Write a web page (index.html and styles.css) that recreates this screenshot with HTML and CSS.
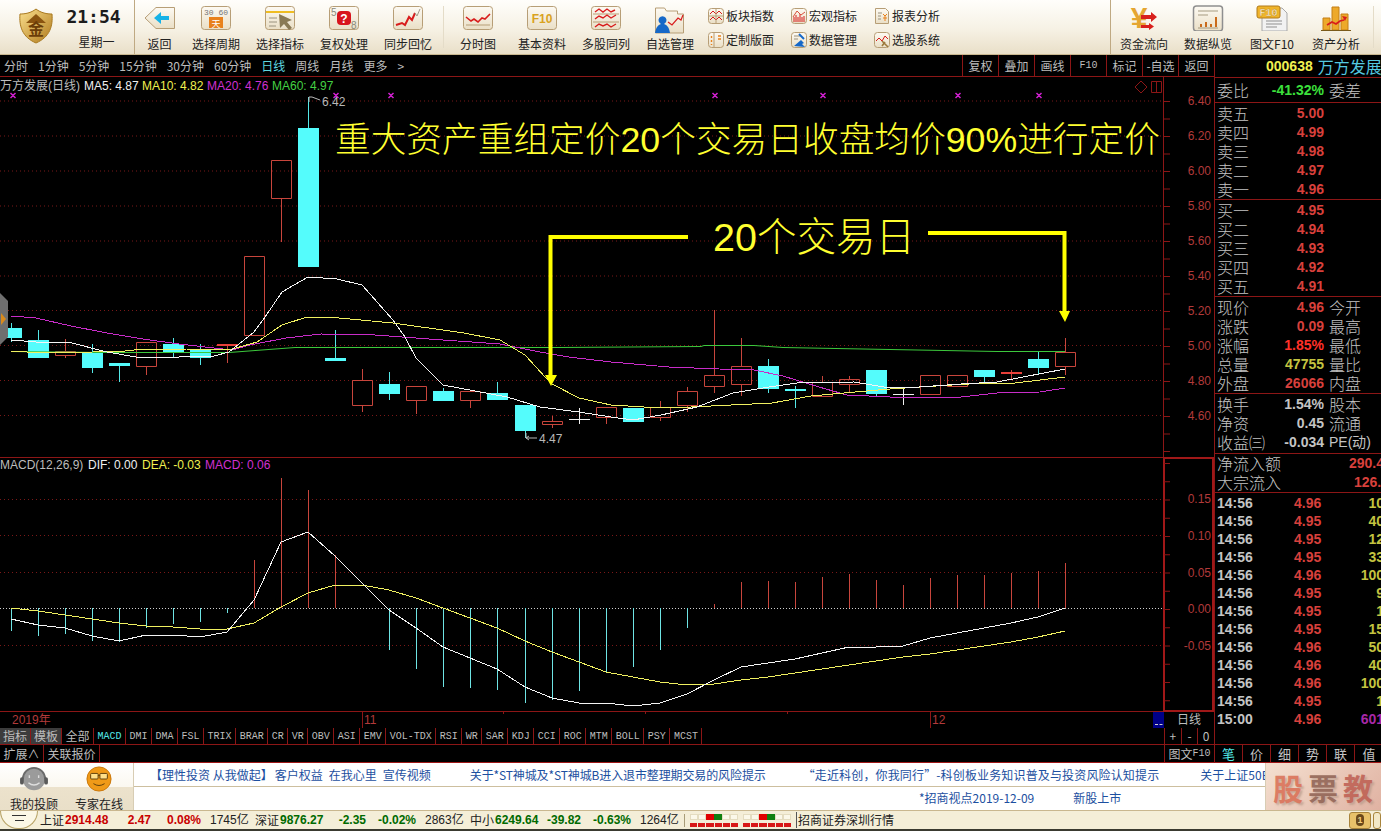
FILE: index.html
```html
<!DOCTYPE html>
<html lang="zh-CN">
<head>
  <meta charset="UTF-8" />
  <title>招商证券 - 万方发展 日线</title>
  <link rel="stylesheet" href="styles.css">
</head>
<body>
  <svg class="defs" aria-hidden="true">
    <defs>
      <linearGradient id="tileFill" x1="0" y1="0" x2="0" y2="1">
        <stop offset="0" stop-color="#fdfaf3"/><stop offset="1" stop-color="#eadfc6"/>
      </linearGradient>
      <linearGradient id="gold" x1="0" y1="0" x2="1" y2="1">
        <stop offset="0" stop-color="#fbe08e"/><stop offset="1" stop-color="#b07a1c"/>
      </linearGradient>
    </defs>
  </svg>

  <!-- top toolbar -->
  <header class="toolbar">
    <div class="brand-box">
      <svg class="shield" viewBox="0 0 34 36">
        <path d="M17 1C22 5 28 6 33 6c1 12-2 23-16 29C3 29 0 18 1 6 6 6 12 5 17 1z" fill="url(#gold)" stroke="#a9791f"/>
        <path d="M17 6L7 15h20z" fill="#8a5410"/>
        <text x="17" y="27" text-anchor="middle" class="shield-txt">金</text>
      </svg>
      <div class="clock">
        <div class="clock-time">21:54</div>
        <div class="clock-day">星期一</div>
      </div>
    </div>

    <div class="tool first">
      <svg class="ico" viewBox="0 0 32 26"><path d="M1 13L12 2.500h18.500v21H12z" fill="url(#tileFill)" stroke="#b79e76"/><path d="M10 13l7-6v4h8v4h-8v4z" fill="#17b2e6"/></svg>
      <span>返回</span>
    </div>
    <div class="tool">
      <svg class="ico" viewBox="0 0 32 26"><rect class="tile" x="1.500" y="1.500" width="29" height="23" rx="3"/><text x="16" y="10" class="ico-small" text-anchor="middle">30 60</text><rect x="9" y="12" width="14" height="11" fill="#e8811c"/><text x="16" y="21.500" class="ico-day" text-anchor="middle">天</text></svg>
      <span>选择周期</span>
    </div>
    <div class="tool">
      <svg class="ico" viewBox="0 0 32 26"><rect class="tile" x="1.500" y="1.500" width="29" height="23" rx="3"/><rect x="2" y="6" width="28" height="2" fill="#efbd22"/><path d="M5 13h8M5 17h8M5 21h7" stroke="#9a927f"/><path d="M15 9l13 6-5 2 5 6-3 2-5-6-4 4z" fill="#8a7a55"/></svg>
      <span>选择指标</span>
    </div>
    <div class="tool">
      <svg class="ico" viewBox="0 0 32 26"><rect class="tile" x="1.500" y="1.500" width="29" height="23" rx="3"/><text x="3" y="11" class="ico-num">5</text><text x="23" y="24" class="ico-num">8</text><rect x="9" y="6" width="14" height="14" rx="4" fill="#d8141c"/><text x="16" y="17.500" class="ico-q" text-anchor="middle">?</text></svg>
      <span>复权处理</span>
    </div>
    <div class="tool">
      <svg class="ico" viewBox="0 0 32 26"><rect class="tile" x="1.500" y="1.500" width="29" height="23" rx="3"/><path d="M4 20l6-2 3 2 4-8 3 3 3-7" fill="none" stroke="#d81c1c" stroke-width="2"/><path d="M23 8l2 3 3-7" fill="none" stroke="#a09a88"/></svg>
      <span>同步回忆</span>
    </div>
    <i class="tool-sep light"></i>
    <div class="tool">
      <svg class="ico" viewBox="0 0 32 26"><rect class="tile" x="1.500" y="1.500" width="29" height="23" rx="3"/><path d="M4 12l5 4 3-2 4 3 4-4 3 1 5-5" fill="none" stroke="#d81c1c" stroke-width="1.600"/><path d="M4 20h24" stroke="#b79e76"/></svg>
      <span>分时图</span>
    </div>
    <div class="tool">
      <svg class="ico" viewBox="0 0 32 26"><rect class="tile" x="1.500" y="1.500" width="29" height="23" rx="3"/><text x="16" y="17.500" class="ico-f10" text-anchor="middle">F10</text></svg>
      <span>基本资料</span>
    </div>
    <div class="tool">
      <svg class="ico" viewBox="0 0 32 26"><rect class="tile" x="1.500" y="1.500" width="29" height="23" rx="3"/><path d="M3 9h26M3 17h26" stroke="#b79e76"/><path d="M5 7l4-3 4 3 4-3 4 3 4-2M5 14l4-3 4 2 4-3 4 3 5-3M5 22l4-3 4 2 4-2 4 3 5-3" fill="none" stroke="#d81c1c" stroke-width="1.400"/></svg>
      <span>多股同列</span>
    </div>
    <div class="tool">
      <svg class="ico tall" viewBox="0 0 32 30"><path d="M1.500 28V3h9l2 3h11v3h6v19z" fill="url(#tileFill)" stroke="#b79e76"/><path d="M1 28c1-6 3-8 6-9a4 4 0 1 1 3 0c3 1 5 3 6 9z" fill="#1668c8"/><path d="M14 17l4 3 6-7 3 2 2-5" fill="none" stroke="#d81c1c" stroke-width="1.200"/></svg>
      <span>自选管理</span>
    </div>
    <div class="tool-small">
      <div class="mini-tool"><svg viewBox="0 0 16 16"><rect class="tile" x=".5" y=".5" width="15" height="15" rx="3"/><path d="M2 6l3-3 3 3 3-3 3 3M2 12l3-3 3 3 3-3 3 3" fill="none" stroke="#d81c1c"/><path d="M8 1v14M1 8h14" stroke="#b79e76"/></svg><span>板块指数</span></div>
      <div class="mini-tool"><svg viewBox="0 0 16 16"><rect class="tile" x=".5" y=".5" width="15" height="15" rx="3"/><path d="M6 1v14" stroke="#b79e76"/><path d="M3.500 4v2M3.500 8v2M3.500 12v1M10 4h3M10 7h3" stroke="#e8811c" stroke-width="1.400"/></svg><span>定制版面</span></div>
    </div>
    <div class="tool-small">
      <div class="mini-tool"><svg viewBox="0 0 16 16"><rect class="tile" x=".5" y=".5" width="15" height="15" rx="3"/><path d="M3 14V9M5 14V7M7 14V9M9 14V6M11 14V9M13 14V8" stroke="#d81c1c"/><path d="M2 9l4-6 4 4 4-3" fill="none" stroke="#d8503c"/></svg><span>宏观指标</span></div>
      <div class="mini-tool"><svg viewBox="0 0 16 16"><rect class="tile" x=".5" y=".5" width="15" height="15" rx="3"/><path d="M3 4h6M3 7h4" stroke="#9a927f"/><path d="M3 14l7-6 3 3-2 1 3 3z" fill="#1668c8"/><path d="M8 2l5 5" stroke="#1668c8" stroke-width="2"/></svg><span>数据管理</span></div>
    </div>
    <div class="tool-small last">
      <div class="mini-tool"><svg viewBox="0 0 16 16"><path d="M1.500 .5h10l3 3v12h-13z" fill="url(#tileFill)" stroke="#b79e76"/><path d="M4 5h4M4 8h3M4 11h3" stroke="#9a927f"/><path d="M9 6l2 2 2-2M11 8v5M9 10h4" fill="none" stroke="#e8811c"/></svg><span>报表分析</span></div>
      <div class="mini-tool"><svg viewBox="0 0 16 16"><rect class="tile" x=".5" y=".5" width="15" height="15" rx="3"/><path d="M2 9l3-3 3 3 3-5 3 3" fill="none" stroke="#d81c1c"/><path d="M8 9l6 6M8 14l3-4" stroke="#9c7a3c" stroke-width="1.600"/></svg><span>选股系统</span></div>
    </div>
    <i class="tool-sep"></i>
    <div class="tool">
      <svg class="ico" viewBox="0 0 32 26"><text x="11" y="23" class="ico-yen" text-anchor="middle">¥</text><path d="M13 10h10V7l6 5-6 5v-3H13zM13 20h8v-2l5 3.500-5 3.500v-2h-8z" fill="#d8201c"/></svg>
      <span>资金流向</span>
    </div>
    <div class="tool">
      <svg class="ico" viewBox="0 0 32 26"><rect x="1.500" y="1" width="29" height="25" rx="3" fill="url(#tileFill)" stroke="#8f8f8f" stroke-width="1.500"/><path d="M6 6h20M6 10h10" stroke="#a59a80"/><path d="M9 22v-3M14 22v-5M19 22v-3M24 22V12" stroke="#c96a1a" stroke-width="2"/><path d="M6 23h20" stroke="#a59a80"/></svg>
      <span>数据纵览</span>
    </div>
    <div class="tool">
      <svg class="ico" viewBox="0 0 32 26"><path d="M6 3h20l5 5v18H6z" fill="#f2f2f2" stroke="#a8a8a8"/><rect x="1" y="1" width="23" height="12" rx="2" fill="#f0b428" stroke="#b07a1c"/><text x="12.500" y="11" class="ico-f10t" text-anchor="middle">F10</text><path d="M10 16h16M10 19h16M10 22h11" stroke="#8f8f8f"/></svg>
      <span>图文F10</span>
    </div>
    <div class="tool">
      <svg class="ico" viewBox="0 0 32 26"><path d="M3 25V13h7v12zM12 25V2h7v23zM21 25V9h7v16z" fill="#eda92a" stroke="#c47f14"/><path d="M1 25.500h30" stroke="#7a5a1a"/><path d="M7 20l5-3 4 2 4-3 4-1" fill="none" stroke="#d81c1c" stroke-width="1.800"/><path d="M22 11l5 1-2 4z" fill="#d81c1c"/></svg>
      <span>资产分析</span>
    </div>
    <i class="tool-sep light end"></i>
  </header>

  <div class="work">
    <div class="chart-col">
      <div class="period-bar">
        <div class="periods">
          <span>分时</span><span>1分钟</span><span>5分钟</span><span>15分钟</span><span>30分钟</span><span>60分钟</span>
          <span class="on">日线</span><span>周线</span><span>月线</span><span>更多</span><span>&gt;</span>
        </div>
        <div class="actions">
          <span>复权</span><span>叠加</span><span>画线</span><span class="latin">F10</span><span>标记</span><span>-自选</span><span>返回</span>
        </div>
      </div>

      <!-- coordinates below are the same as page coordinates -->
      <svg class="chart" viewBox="0 77 1214 651">
        <path class="grid" d="M0 101H1163M0 136H1163M0 171H1163M0 206H1163M0 241H1163M0 276H1163M0 310.500H1163M0 345.500H1163M0 380.500H1163M0 415.500H1163"/>
        <path class="grid" d="M0 499.500H1163M0 535.500H1163M0 572.500H1163M0 645.500H1163"/>
        <path class="zero" d="M0 608.500H1163"/>

        <!-- frame and axes -->
        <path class="frame" d="M0 457.500H1214M1163.500 77V711M0 711.500H1214"/>
        <rect class="frame-hi" x="1164" y="458" width="49" height="253"/>
        <path class="ticks" d="M1167 101V452"/>
        <path class="ticks-b" d="M1167 463V705"/>
        <path class="frame" d="M1141 81l6 6-6 6-6-6zM1151.500 81.500h10v11h-10zM1156.500 81.500v11"/>
        <path class="frame" d="M362.500 711V728M503.500 711V714M645.500 711V714M787.500 711V714M930.500 711V728"/>

        <g class="axis">
          <text x="1211" y="105">6.40</text><text x="1211" y="140">6.20</text><text x="1211" y="175">6.00</text><text x="1211" y="210">5.80</text><text x="1211" y="245">5.60</text>
          <text x="1211" y="280">5.40</text><text x="1211" y="315">5.20</text><text x="1211" y="350">5.00</text><text x="1211" y="385">4.80</text><text x="1211" y="420">4.60</text>
          <text x="1211" y="503">0.15</text><text x="1211" y="540">0.10</text><text x="1211" y="577">0.05</text><text x="1211" y="613">0.00</text><text x="1211" y="650">-0.05</text>
        </g>

        <!-- legends -->
        <g class="legend">
          <text x="0" y="90" class="c-gray cjk">万方发展(日线)</text>
          <text x="84" y="90" class="c-white">MA5: 4.87</text>
          <text x="142" y="90" class="c-yellow">MA10: 4.82</text>
          <text x="207" y="90" class="c-pink">MA20: 4.76</text>
          <text x="272" y="90" class="c-green">MA60: 4.97</text>
          <text x="0" y="469" class="c-gray">MACD(12,26,9)</text>
          <text x="88" y="469" class="c-white">DIF: 0.00</text>
          <text x="142" y="469" class="c-yellow">DEA: -0.03</text>
          <text x="205" y="469" class="c-pink">MACD: 0.06</text>
        </g>

        <!-- markers on the top of the price panel -->
        <path class="marks" d="M10.500 93l5 5m0-5l-5 5M333.500 93l5 5m0-5l-5 5M388.500 93l5 5m0-5l-5 5M712.500 93l5 5m0-5l-5 5M820.500 93l5 5m0-5l-5 5M955.500 93l5 5m0-5l-5 5M1036.500 93l5 5m0-5l-5 5"/>

        <!-- candles -->
        <path class="wick-up" d="M65.500 339V351M65.500 356V358M146.500 367V375M227.500 346V363M281.500 199V242M362.500 369V380M362.500 406V412M416.500 401V414M470.500 401V408M552.500 416V421M552.500 425V428M606.500 418V424M660.500 401V407M660.500 418V421M687.500 387V391M687.500 406V412M714.500 310V375M714.500 387V393M741.500 338V366M741.500 385V396M822.500 376V382M849.500 376V379M849.500 385V393M1011.500 370V372M1011.500 374V379M1065.500 338V352M1065.500 367V375"/>
        <path class="body-up" d="M55.500 351.500h20v4h-20zM136.500 342.500h20v24h-20zM244.500 256.500h20v79h-20zM271.500 160.500h20v38h-20zM352.500 380.500h20v25h-20zM406.500 386.500h20v14h-20zM460.500 391.500h20v9h-20zM542.500 421.500h20v3h-20zM596.500 407.500h20v10h-20zM650.500 407.500h20v10h-20zM677.500 391.500h20v14h-20zM704.500 375.500h20v11h-20zM731.500 366.500h20v18h-20zM812.500 382.500h20v14h-20zM839.500 379.500h20v5h-20zM920.500 375.500h20v19h-20zM947.500 375.500h20v11h-20zM1055.500 352.500h20v14h-20z"/>
        <path class="body-flat" d="M217 344h21v2h-21zM1001 372h21v2h-21z"/>
        <path class="wick-down" d="M11.500 323V328M11.500 338V342M38.500 330V340M92.500 344V353M92.500 368V373M119.500 366V382M173.500 338V344M173.500 353V358M200.500 344V349M200.500 358V365M308.500 97V128M335.500 330V358M389.500 372V384M389.500 394V400M443.500 388V391M497.500 382V393M525.500 431V438M768.500 359V366M768.500 389V393M795.500 386V389M795.500 391V408M876.500 394V396M984.500 377V382M1038.500 352V359M1038.500 368V375"/>
        <path class="body-down" d="M1 328h21v10H1zM28 340h21v18H28zM82 353h21v15H82zM109 363h21v3h-21zM163 344h21v9h-21zM190 349h21v9h-21zM298 128h21v139h-21zM325 358h21v3h-21zM379 384h21v10h-21zM433 391h21v10h-21zM487 393h21v7h-21zM515 405h21v26h-21zM623 408h21v14h-21zM758 366h21v23h-21zM785 389h21v2h-21zM866 370h21v24h-21zM974 370h21v7h-21zM1028 359h21v9h-21z"/>
        <path class="doji" d="M569 419.500h21M579.500 408V424M893 394.500h21M903.500 388V405"/>

        <!-- moving averages -->
        <polyline class="l-green" points="11,351.500 104,352.500 229,352.500 295,347.500 560,347.500 701,346.500 704,345.500 754,345.500 783,347.500 836,348.500 890,349.500 944,350.500 997,351.500 1065,351.500"/>
        <polyline class="l-pink" points="11,316 36,318 71,326 107,333 143,339 179,344 214,348 232,350 250,345 286,338 321,334 375,335 429,339 500,344 540,352 569,357 611,362 669,367 719,369 754,370 783,376 819,387 847,395 890,397 961,397 997,393 1040,392 1065,388"/>
        <polyline class="l-yellow" points="11,351 43,353 93,352 125,351 143,349 186,349 229,350 257,342 282,325 307,317 339,318 393,323 464,333 500,340 525,355 546,378 552,384 579,398 611,405 644,407 672,408 711,406 772,403 811,396 844,393 890,389 936,386 986,383 1015,383 1040,380 1065,377"/>
        <polyline class="l-white" points="11,340 36,342 68,342 107,352 136,357 179,357 214,356 229,352 254,332 263,320 282,292 308,277 337,279 362,285 393,320 405,337 416,358 443,385 507,397 540,407 579,412 611,417 633,420 661,415 697,407 733,393 769,387 797,383 854,382 890,388 919,387 961,384 997,382 1065,369"/>

        <!-- high and low labels -->
        <path class="flag" d="M309 102V97h3M312 97l8 3M526 433V438h11M526 438l3-2M526 438l3 2"/>
        <text x="322" y="106" class="flag-txt">6.42</text>
        <text x="539" y="443" class="flag-txt">4.47</text>

        <!-- hand drawn notes -->
        <text x="335" y="152" class="note">重大资产重组定价<tspan class="note-num">20</tspan>个交易日收盘均价<tspan class="note-num">90%</tspan>进行定价</text>
        <text x="713" y="251" class="note big"><tspan class="note-num">20</tspan>个交易日</text>
        <path class="arrow" d="M688 237H550.500V377M928 233H1064.500V312"/>
        <path class="arrow-head" d="M545 375h12l-6 11zM1059 311h11l-5 11z"/>

        <!-- left drawer handle -->
        <path d="M0 293l8 8v36l-8 8z" fill="#6f6f6f"/>
        <path d="M1 313l5 6-5 6z" fill="#d98a1c"/>

        <!-- MACD -->
        <path class="bar-down" d="M11.500 608V631M38.500 608V636M65.500 608V634M92.500 608V641M119.500 608V642M146.500 608V628M173.500 608V624M200.500 608V622M227.500 608V613M389.500 608V650M416.500 608V669M443.500 608V687M470.500 608V688M497.500 608V690M525.500 608V703M552.500 608V700M579.500 608V691M606.500 608V673M633.500 608V667M660.500 608V650M687.500 608V628"/>
        <path class="bar-up" d="M254.500 608V560M281.500 608V478M308.500 608V490M335.500 608V555M714.500 608V604M741.500 608V582M768.500 608V581M795.500 608V582M822.500 608V577M849.500 608V574M876.500 608V580M903.500 608V585M930.500 608V578M957.500 608V575M984.500 608V575M1011.500 608V573M1038.500 608V571M1065.500 608V563"/>
        <polyline class="l-yellow" points="11,608 38,611 65,615 92,619 119,623 146,626 173,627 200,629 227,629 254,623 281,607 308,593 335,585 362,585 389,590 416,598 443,608 470,618 497,628 525,641 552,652 579,662 606,672 633,677 660,682 687,685 714,684 741,680 768,677 795,673 822,669 849,665 876,661 903,657 930,654 957,650 984,646 1011,642 1038,637 1065,631"/>
        <polyline class="l-white" points="11,619 38,625 65,628 92,636 119,641 146,635 173,635 200,637 227,632 254,600 281,542 308,532 335,556 362,583 389,610 416,628 443,647 470,658 497,669 525,687 552,698 579,703 606,703 633,706 660,703 687,694 714,680 741,667 768,663 795,659 822,653 849,647 876,647 903,646 930,638 957,633 984,628 1011,623 1038,617 1065,608"/>

        <!-- date row -->
        <text x="12" y="724" class="date-txt">2019年</text>
        <text x="364" y="724" class="date-txt">11</text>
        <text x="932" y="724" class="date-txt">12</text>
        <rect x="1153" y="712" width="11" height="16" fill="#000088"/>
        <path d="M1155 724.500h3M1159.500 724.500h3" stroke="#d0d0d0"/>
        <text x="1189" y="724" class="date-kind" text-anchor="middle">日线</text>
      </svg>

      <div class="tabs-row">
        <div class="tabs">
          <span class="solid">指标</span><span class="solid">模板</span><span>全部</span><span class="mono on">MACD</span><span class="mono">DMI</span><span class="mono">DMA</span><span class="mono">FSL</span><span class="mono">TRIX</span><span class="mono">BRAR</span><span class="mono">CR</span><span class="mono">VR</span><span class="mono">OBV</span><span class="mono">ASI</span><span class="mono">EMV</span><span class="mono">VOL-TDX</span><span class="mono">RSI</span><span class="mono">WR</span><span class="mono">SAR</span><span class="mono">KDJ</span><span class="mono">CCI</span><span class="mono">ROC</span><span class="mono">MTM</span><span class="mono">BOLL</span><span class="mono">PSY</span><span class="mono">MCST</span>
        </div>
        <div class="zoom-btns"><span>+</span><span>-</span><span>0</span></div>
      </div>
      <div class="ext-row">
        <div class="tabs"><span>扩展∧</span><span>关联报价</span></div>
        <div class="ext-right">图文<b class="mono-in">F10</b></div>
      </div>
    </div>

    <!-- quote panel -->
    <aside class="side">
      <div class="stock"><span class="code">000638</span><span class="name">万方发展</span></div>
      <div class="sect wei"><div class="row"><label>委比</label><b class="green">-41.32%</b><label class="lbl2">委差</label></div></div>
      <div class="sect">
        <div class="row"><label>卖五</label><b>5.00</b></div>
        <div class="row"><label>卖四</label><b>4.99</b></div>
        <div class="row"><label>卖三</label><b>4.98</b></div>
        <div class="row"><label>卖二</label><b>4.97</b></div>
        <div class="row"><label>卖一</label><b>4.96</b></div>
      </div>
      <div class="sect">
        <div class="row"><label>买一</label><b>4.95</b></div>
        <div class="row"><label>买二</label><b>4.94</b></div>
        <div class="row"><label>买三</label><b>4.93</b></div>
        <div class="row"><label>买四</label><b>4.92</b></div>
        <div class="row"><label>买五</label><b>4.91</b></div>
      </div>
      <div class="sect">
        <div class="row"><label>现价</label><b>4.96</b><label class="lbl2">今开</label></div>
        <div class="row"><label>涨跌</label><b>0.09</b><label class="lbl2">最高</label></div>
        <div class="row"><label>涨幅</label><b class="hot">1.85%</b><label class="lbl2">最低</label></div>
        <div class="row"><label>总量</label><b class="olive">47755</b><label class="lbl2">量比</label></div>
        <div class="row"><label>外盘</label><b>26066</b><label class="lbl2">内盘</label></div>
      </div>
      <div class="sect fin">
        <div class="row"><label>换手</label><b class="plain">1.54%</b><label class="lbl2">股本</label></div>
        <div class="row"><label>净资</label><b class="plain">0.45</b><label class="lbl2">流通</label></div>
        <div class="row"><label class="wide">收益㈢</label><b class="plain short">-0.034</b><label class="lbl2 pe">PE(动)</label></div>
      </div>
      <div class="sect flow">
        <div class="row"><label class="wide4">净流入额</label><b class="clip">290.4</b></div>
        <div class="row"><label class="wide4">大宗流入</label><b class="clip two">126.</b></div>
      </div>
      <div class="ticks-list">
        <div class="tick"><b>14:56</b><b class="p">4.96</b><b class="v">10</b></div>
        <div class="tick"><b>14:56</b><b class="p">4.95</b><b class="v">40</b></div>
        <div class="tick"><b>14:56</b><b class="p">4.95</b><b class="v">12</b></div>
        <div class="tick"><b>14:56</b><b class="p">4.95</b><b class="v">33</b></div>
        <div class="tick"><b>14:56</b><b class="p">4.96</b><b class="v">100</b></div>
        <div class="tick"><b>14:56</b><b class="p">4.95</b><b class="v">9</b></div>
        <div class="tick"><b>14:56</b><b class="p">4.95</b><b class="v">1</b></div>
        <div class="tick"><b>14:56</b><b class="p">4.95</b><b class="v">15</b></div>
        <div class="tick"><b>14:56</b><b class="p">4.96</b><b class="v">50</b></div>
        <div class="tick"><b>14:56</b><b class="p">4.96</b><b class="v">40</b></div>
        <div class="tick"><b>14:56</b><b class="p">4.96</b><b class="v">100</b></div>
        <div class="tick"><b>14:56</b><b class="p">4.95</b><b class="v">1</b></div>
        <div class="tick"><b>15:00</b><b class="p">4.96</b><b class="v last">601</b></div>
      </div>
      <div class="side-tabs"><span class="on">笔</span><span>价</span><span>细</span><span>势</span><span>联</span><span>值</span></div>
    </aside>
  </div>

  <!-- news strip -->
  <section class="news">
    <div class="advisors">
      <div class="advisor">
        <svg viewBox="0 0 32 28"><circle cx="16" cy="14" r="12" fill="#9b9b9b"/><path d="M4 14a12 12 0 0 1 24 0" fill="none" stroke="#6a6a6a" stroke-width="2"/><rect x="1" y="12" width="4" height="8" rx="2" fill="#5a5a5a"/><rect x="27" y="12" width="4" height="8" rx="2" fill="#5a5a5a"/><path d="M11 10v3M21 10v3M10 18q6 5 12 0" fill="none" stroke="#dedede" stroke-width="1.500"/></svg>
        <span>我的投顾</span>
      </div>
      <div class="advisor">
        <svg viewBox="0 0 32 28"><circle cx="16" cy="14" r="13" fill="#f09a18" stroke="#c87408"/><rect x="7" y="8" width="8" height="6" rx="1" fill="#ffe08a" stroke="#5a3a08"/><rect x="17" y="8" width="8" height="6" rx="1" fill="#ffe08a" stroke="#5a3a08"/><path d="M15 10h2M10 19q6 4 12 0" fill="none" stroke="#5a3a08"/></svg>
        <span>专家在线</span>
      </div>
    </div>
    <div class="ticker">
      <div class="ticker-row top">
        <span>【理性投资 从我做起】</span><span class="near lead">客户权益</span><span class="near">在我心里</span><span class="near">宣传视频</span>
        <span class="item-a">关于*ST神城及*ST神城B进入退市整理期交易的风险提示</span>
        <span class="item-b">“走近科创，你我同行”-科创板业务知识普及与投资风险认知提示</span>
        <span class="item-c">关于上证50E</span>
      </div>
      <div class="ticker-row bottom">
        <span>*招商视点2019-12-09</span><span class="item-d">新股上市</span>
      </div>
    </div>
    <div class="promo"><span class="p1">股</span><span class="p2">票</span><span class="p3">教</span></div>
  </section>

  <!-- status bar -->
  <footer class="status">
    <div class="menu-btn"><i></i><i></i></div>
    <div class="idx"><span class="n">上证</span><b class="val up">2914.48</b><b class="chg up">2.47</b><b class="pct up">0.08%</b><span class="amt">1745亿</span></div>
    <div class="idx"><span class="n">深证</span><b class="val down">9876.27</b><b class="chg down">-2.35</b><b class="pct down">-0.02%</b><span class="amt">2863亿</span></div>
    <div class="idx third"><span class="n">中小</span><b class="val down">6249.64</b><b class="chg down">-39.82</b><b class="pct down">-0.63%</b><span class="amt">1264亿</span></div>
    <div class="meters">
      <div class="meter"><div class="cells"><i></i><i></i><i class="r"></i><i class="g"></i><i></i><i></i></div><div class="dash"><i></i><i></i><i></i><i></i><i></i><i></i></div></div>
      <div class="meter"><div class="cells"><i></i><i></i><i class="r"></i><i class="g"></i><i></i><i></i></div><div class="dash"><i></i><i></i><i></i><i></i><i></i><i></i></div></div>
    </div>
    <div class="broker">招商证券深圳行情</div>
    <div class="status-btns"><span class="sbtn"><i>1</i></span><span class="sbtn cut"></span></div>
  </footer>
</body>
</html>
```

FILE: styles.css
```css
* { box-sizing: border-box; }
html, body { margin: 0; padding: 0; }
body {
  width: 1381px;
  height: 831px;
  overflow: hidden;
  background: #000;
  font-family: "Noto Sans CJK SC", "Liberation Sans", sans-serif;
  font-size: 12px;
  line-height: 1;
  display: flex;
  flex-direction: column;
}
.defs { display: block; width: 0; height: 0; }

/* toolbar */
.toolbar {
  flex: none;
  height: 55px;
  display: flex;
  background: linear-gradient(#fffefb, #f6f1e4 55%, #e9dfc8);
  border-bottom: 1px solid #c9b78f;
  color: #222;
}
.brand-box {
  width: 135px;
  display: flex;
  border-right: 1px solid #bfa982;
  padding: 8px 0 0 19px;
}
.shield { width: 34px; height: 36px; }
.shield-txt { font-size: 16px; font-weight: 700; fill: #6a3d08; }
.clock { width: 81px; text-align: center; }
.clock-time {
  font: 700 18px "DejaVu Sans Mono", monospace;
  height: 24px;
  margin-top: -2px;
  color: #1c1c1c;
}
.clock-day { margin-top: 6px; padding-left: 6px; font-size: 12px; color: #222; }

.tool {
  width: 64px;
  display: flex;
  flex-direction: column;
  align-items: center;
  padding-top: 5px;
  position: relative;
}
.tool.first { width: 49px; }
.tool span { position: absolute; top: 38px; white-space: nowrap; }
.ico { width: 32px; height: 26px; display: block; }
.ico.tall { height: 30px; }
.tile { fill: url(#tileFill); stroke: #b79e76; }
.ico-small { font: 8px "Liberation Mono", monospace; fill: #777; }
.ico-day { font-size: 9px; fill: #fff; }
.ico-num { font: 10px "Liberation Sans", sans-serif; fill: #8a8a7a; }
.ico-q { font: 700 12px "Liberation Sans", sans-serif; fill: #fff; }
.ico-f10 { font: 700 12px "Liberation Sans", sans-serif; fill: #d9a21e; }
.ico-f10t { font: 700 10px "Liberation Mono", monospace; fill: #fff6d0; stroke: #b07a1c; stroke-width: .3px; }
.ico-yen { font: 700 30px "Liberation Sans", sans-serif; fill: #e5a632; }
.tool-sep { width: 1px; margin: 0 1px 0 0; background: #bfa982; flex: none; }
.tool-sep.light { background: #e4dcc8; margin: 6px 2px 6px 3px; }
.tool-sep.light.end { margin-left: 5px; }

.tool-small {
  width: 83px;
  padding: 8px 0 0 6px;
  display: flex;
  flex-direction: column;
  gap: 8px;
}
.tool-small.last { width: 242px; }
.mini-tool { display: flex; align-items: center; gap: 2px; height: 16px; }
.mini-tool svg { width: 16px; height: 16px; flex: none; }

/* main area */
.work { flex: none; height: 708px; display: flex; }
.chart-col { width: 1214px; flex: none; display: flex; flex-direction: column; }

.period-bar {
  height: 22px;
  flex: none;
  display: flex;
  justify-content: space-between;
  border-bottom: 1px solid #8c1616;
  color: #bdbdbd;
}
.periods { display: flex; gap: 10px; padding-left: 4px; align-items: center; }
.periods .on { color: #5fd8e0; }
.actions { display: flex; }
.actions span {
  width: 36px;
  display: flex;
  align-items: center;
  justify-content: center;
  border-left: 1px solid #8c1616;
}
.actions .latin { font: 10px "Liberation Mono", monospace; }

.chart { display: block; width: 1214px; height: 651px; flex: none; }
.chart text { font-family: "Liberation Sans", "Noto Sans CJK SC", sans-serif; font-size: 12px; }
.grid { stroke: #7a1818; fill: none; stroke-dasharray: 1 3; }
.zero { stroke: #cfcfcf; fill: none; stroke-dasharray: 1 2; }
.frame { stroke: #8c1616; fill: none; }
.frame-hi { stroke: #a01818; stroke-width: 2; fill: none; }
.ticks { stroke: #8c1616; stroke-width: 6; stroke-dasharray: 1 16.500; fill: none; }
.ticks-b { stroke: #8c1616; stroke-width: 6; stroke-dasharray: 1 17.250; fill: none; }
.axis text { fill: #b23a3a; text-anchor: end; }
.c-gray { fill: #bdbdbd; }
.c-white { fill: #f0f0f0; }
.c-yellow { fill: #f0f050; }
.c-pink { fill: #d030d0; }
.c-green { fill: #44d044; }
.marks { stroke: #d020d0; stroke-width: 1.500; fill: none; }
.wick-up { stroke: #c8453c; fill: none; }
.body-up { stroke: #c8453c; fill: none; }
.body-flat { fill: #e8403a; }
.wick-down { stroke: #54e8e8; fill: none; }
.body-down { fill: #54fcfc; }
.doji { stroke: #f0f0f0; fill: none; }
.l-green, .l-pink, .l-yellow, .l-white { fill: none; stroke-width: 1; shape-rendering: crispEdges; }
.l-green { stroke: #3cc83c; shape-rendering: auto; }
.l-pink { stroke: #c82cc8; }
.l-yellow { stroke: #f0f060; }
.l-white { stroke: #f4f4f4; }
.flag { stroke: #b8b8b8; fill: none; }
.chart .flag-txt { fill: #b8b8b8; }
.chart .note {
  font-family: "Noto Sans CJK SC", sans-serif;
  font-size: 35.700px;
  font-weight: 300;
  fill: #ffff30;
}
.chart .note.big { font-size: 39.500px; }
.note-num { font-family: "Liberation Sans", sans-serif; }
.arrow { stroke: #ffff00; stroke-width: 4; fill: none; }
.arrow-head { fill: #ffff00; }
.bar-up { stroke: #c8453c; fill: none; }
.bar-down { stroke: #6ee4e4; fill: none; }
.chart .date-txt { fill: #b23a3a; font-size: 12px; }
.chart .date-kind { fill: #bdbdbd; }

.tabs-row, .ext-row {
  flex: none;
  display: flex;
  justify-content: space-between;
  color: #bdbdbd;
  border-bottom: 1px solid #8c1616;
}
.tabs-row { height: 17px; }
.ext-row { height: 18px; border-bottom-color: #a01818; }
.tabs { display: flex; }
.tabs span {
  padding: 0 3.500px;
  display: flex;
  align-items: center;
  border-right: 1px solid #8c1616;
}
.tabs .solid { background: #3c3c3c; padding: 0 3px; }
.tabs .mono { font: 10px "Liberation Mono", monospace; }
.tabs .on { color: #54e8e8; }
.zoom-btns { width: 50px; display: flex; border-left: 1px solid #8c1616; }
.zoom-btns span { flex: 1; display: flex; align-items: center; justify-content: center; border-right: 1px solid #8c1616; }
.zoom-btns span:last-child { border-right: 0; }
.ext-right { width: 50px; display: flex; align-items: center; justify-content: center; border-left: 1px solid #8c1616; }
.mono-in { font: 400 10px "Liberation Mono", monospace; }

/* right panel */
.side {
  width: 167px;
  flex: none;
  display: flex;
  flex-direction: column;
  border-left: 1px solid #8c1616;
  overflow: hidden;
  color: #c4c4c4;
}
.stock {
  height: 23px;
  flex: none;
  display: flex;
  align-items: center;
  padding-left: 51px;
  gap: 5px;
  border-bottom: 1px solid #8c1616;
  white-space: nowrap;
}
.code { font: 700 14px "Liberation Sans", sans-serif; color: #f0f050; }
.name { font-size: 16px; color: #54c8e0; }
.sect { flex: none; padding: 1px 0 0 2px; border-bottom: 1px solid #8c1616; }
.sect.wei { height: 25px; padding-top: 3px; }
.sect.fin { height: 60px; padding-top: 1px; }
.sect.flow { height: 39px; padding-top: 0; }
.row { height: 19px; padding-bottom: 2px; display: flex; align-items: center; white-space: nowrap; }
.row label { width: 32px; font-size: 16px; flex: none; font-weight: 300; }
.row label.wide { width: 48px; }
.row label.wide4 { width: 64px; }
.row b {
  width: 75px;
  text-align: right;
  font: 700 14px "Liberation Sans", sans-serif;
  color: #d8403c;
  flex: none;
}
.row b.short { width: 59px; }
.row b.green { color: #3ce03c; }
.row b.hot { color: #ff3028; }
.row b.olive { color: #c4c440; }
.row b.plain { color: #c4c4c4; }
.row b.clip { width: auto; margin-left: 68px; }
.row b.clip.two { margin-left: 73px; }
.lbl2 { margin-left: 5px; }
.row label.pe { font-family: "Liberation Sans", sans-serif; font-size: 14px; white-space: nowrap; }
.ticks-list { flex: 1; padding: 1px 0 0 2px; border-bottom: 1px solid #8c1616; }
.tick { height: 18px; display: flex; align-items: center; font: 700 14px "Liberation Sans", sans-serif; white-space: nowrap; }
.tick b { width: 77px; flex: none; }
.tick .p { width: 30px; color: #d8403c; }
.tick .v { width: 60px; text-align: right; color: #c4c440; }
.tick .v.last { color: #a828a8; }
.side-tabs { height: 18px; flex: none; display: flex; border-bottom: 1px solid #a01818; }
.side-tabs span { width: 28px; flex: none; display: flex; align-items: center; justify-content: center; border-right: 1px solid #8c1616; font-size: 13px; }
.side-tabs span:last-child { border-right: 0; }
.side-tabs .on { color: #54e8e8; }

/* news strip */
.news { flex: none; height: 47px; display: flex; background: #fff; }
.advisors {
  width: 134px;
  flex: none;
  display: flex;
  background: linear-gradient(#fff, #fbf8f0 50%, #ece2cc 52%, #e9dfc8);
  border-right: 1px solid #d8cdb4;
  padding-left: 10px;
  gap: 17px;
  color: #222;
}
.advisor { width: 48px; display: flex; flex-direction: column; align-items: center; }
.advisor svg { width: 32px; height: 28px; margin-top: 3px; }
.advisor span { margin-top: 6px; white-space: nowrap; }
.ticker { flex: 1; min-width: 0; display: flex; flex-direction: column; color: #1c4fa0; overflow: hidden; }
.ticker-row { display: flex; align-items: center; white-space: nowrap; flex: none; }
.ticker-row.top { height: 24px; padding-left: 16px; border-bottom: 1px solid #cdbf9f; }
.ticker-row.bottom { height: 22px; padding-left: 785px; }
.near { margin-left: 6px; }
.near.lead { margin-left: 2px; }
.item-a { margin-left: 39px; letter-spacing: -.12px; }
.item-b { margin-left: 37px; letter-spacing: .15px; }
.item-c { margin-left: 41px; }
.item-d { margin-left: 39px; }
.promo {
  width: 116px;
  flex: none;
  overflow: hidden;
  background: linear-gradient(135deg, #f4e0d0, #e0b2a2);
  border-left: 1px solid #d8cdb4;
  display: flex;
  align-items: center;
  padding-left: 7px;
  gap: 5px;
}
.promo span { font-size: 30px; font-weight: 700; white-space: nowrap; opacity: .7; text-shadow: 2px 2px 2px #b89a8a; }
.promo .p1 { color: #d4583c; }
.promo .p2 { color: #7a4a3c; }
.promo .p3 { color: #b4483c; }

/* status bar */
.status {
  flex: none;
  height: 21px;
  display: flex;
  align-items: center;
  background: #f4eed8;
  border-top: 1px solid #c9b78f;
  border-bottom: 2px solid #3a3a30;
  color: #222;
  white-space: nowrap;
}
.menu-btn {
  width: 38px;
  height: 18px;
  margin: -1px 2px 0 0;
  flex: none;
  border: 1px solid #b8a468;
  border-top: 0;
  border-radius: 0 0 19px 19px;
  background: #fbf7e6;
  display: flex;
  flex-direction: column;
  align-items: center;
  gap: 4px;
  padding-top: 4px;
}
.menu-btn i { display: block; height: 1px; width: 14px; background: #333; }
.menu-btn i + i { width: 9px; }
.idx { width: 215px; display: flex; align-items: center; flex: none; }
.idx .n { width: 25px; flex: none; }
.idx b { font: 700 12px "Liberation Sans", sans-serif; flex: none; }
.idx .val { width: 46px; }
.idx .chg { width: 40px; text-align: right; }
.idx .pct { width: 50px; text-align: right; }
.idx .amt { margin-left: 9px; font-family: "Liberation Sans", "Noto Sans CJK SC", sans-serif; }
.up { color: #c80000; }
.down { color: #006a00; }
.idx.third { width: 214px; }
.meters { display: flex; gap: 5px; flex: none; border-left: 1px solid #a89c78; padding-left: 5px; }
.meter { width: 48px; display: flex; flex-direction: column; gap: 3px; }
.cells, .dash { display: flex; }
.cells i { flex: 1; height: 6px; background: #fbf8ea; border: 1px solid #e4dcc0; }
.cells .r { background: #e00000; border-color: #e00000; }
.cells .g { background: #108010; border-color: #108010; }
.dash { gap: 1px; }
.dash i { flex: 1; height: 4px; background: #d81818; }
.broker { margin-left: 5px; padding-left: 1px; border-left: 1px solid #555; height: 16px; line-height: 16px; }
.status-btns { margin-left: auto; display: flex; gap: 2px; }
.sbtn { width: 22px; height: 17px; background: #e8c26a; border: 1px solid #a8843c; border-radius: 3px; display: flex; align-items: center; justify-content: center; }
.sbtn i { width: 8px; height: 12px; border-radius: 4px; background: #6a4a1c; color: #f2d080; font: 700 9px "Liberation Sans", sans-serif; text-align: center; line-height: 12px; }
.sbtn.cut { width: 8px; background: #f2e8c8; }
```
